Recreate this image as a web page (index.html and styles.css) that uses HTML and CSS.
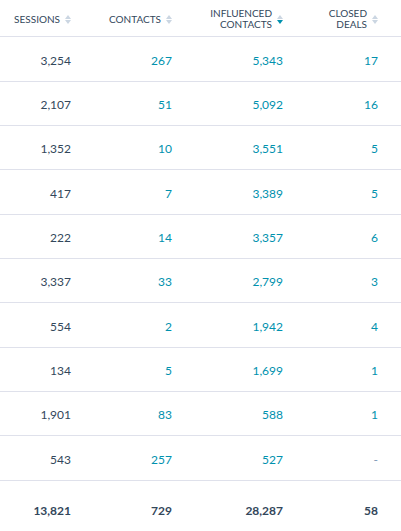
FILE: index.html
```html
<!DOCTYPE html>
<html>
<head>
<meta charset="utf-8">
<link rel="stylesheet" href="styles.css">
</head>
<body>
<table class="report">
  <colgroup>
    <col class="c1"><col class="c2"><col class="c3"><col class="c4">
  </colgroup>
  <thead>
    <tr>
      <th><span class="th-inner"><span class="label">Sessions</span><span class="sort"><i class="up"></i><i class="down"></i></span></span></th>
      <th><span class="th-inner"><span class="label">Contacts</span><span class="sort"><i class="up"></i><i class="down"></i></span></span></th>
      <th><span class="th-inner"><span class="label">Influenced<br>contacts</span><span class="sort"><i class="up"></i><i class="down active"></i></span></span></th>
      <th><span class="th-inner"><span class="label">Closed<br>deals</span><span class="sort"><i class="up"></i><i class="down"></i></span></span></th>
    </tr>
  </thead>
  <tbody>
    <tr><td>3,254</td><td class="link">267</td><td class="link">5,343</td><td class="link">17</td></tr>
    <tr><td>2,107</td><td class="link">51</td><td class="link">5,092</td><td class="link">16</td></tr>
    <tr><td>1,352</td><td class="link">10</td><td class="link">3,551</td><td class="link">5</td></tr>
    <tr><td>417</td><td class="link">7</td><td class="link">3,389</td><td class="link">5</td></tr>
    <tr><td>222</td><td class="link">14</td><td class="link">3,357</td><td class="link">6</td></tr>
    <tr><td>3,337</td><td class="link">33</td><td class="link">2,799</td><td class="link">3</td></tr>
    <tr><td>554</td><td class="link">2</td><td class="link">1,942</td><td class="link">4</td></tr>
    <tr><td>134</td><td class="link">5</td><td class="link">1,699</td><td class="link">1</td></tr>
    <tr><td>1,901</td><td class="link">83</td><td class="link">588</td><td class="link">1</td></tr>
    <tr><td>543</td><td class="link">257</td><td class="link">527</td><td class="empty">-</td></tr>
  </tbody>
  <tfoot>
    <tr><td>13,821</td><td>729</td><td>28,287</td><td>58</td></tr>
  </tfoot>
</table>
</body>
</html>
```
FILE: styles.css
```css
html, body {
  margin: 0;
  padding: 0;
  background: #ffffff;
}
body {
  font-family: Lato, "Noto Sans", sans-serif;
  color: #33475b;
  overflow: hidden;
}
.report {
  width: 401px;
  table-layout: fixed;
  border-collapse: separate;
  border-spacing: 0;
}
.c1 { width: 93px; }
.c2 { width: 101px; }
.c3 { width: 111px; }
.c4 { width: 96px; }

th, td {
  padding: 0 22px 0 0;
  text-align: right;
  vertical-align: middle;
  box-sizing: border-box;
}
th:last-child, td:last-child { padding-right: 23px; }

thead th {
  height: 37.4px;
  border-bottom: 1px solid #dfe1eb;
  font-size: 10px;
  font-weight: 400;
  text-transform: uppercase;
  line-height: 11px;
  color: #33475b;
  padding-top: 2px;
}
.th-inner {
  display: inline-flex;
  align-items: center;
  gap: 4px;
}
.label { text-align: right; letter-spacing: 0; }
.sort {
  display: inline-flex;
  flex-direction: column;
  gap: 1px;
  width: 7px;
  align-items: center;
}
.sort i {
  display: block;
  width: 0;
  height: 0;
  border-left: 3.5px solid transparent;
  border-right: 3.5px solid transparent;
}
.sort .up { border-bottom: 4px solid #cbd6e2; }
.sort .down { border-top: 4px solid #cbd6e2; }
.sort .down.active { border-top-color: #0091ae; }

tbody td {
  height: 44.33px;
  border-bottom: 1px solid #dfe1eb;
  font-size: 12px;
  color: #33475b;
  padding-top: 2px;
}
tbody td.link { color: #0091ae; }
tbody td.empty { color: #7c98b6; }

tfoot td {
  height: 60px;
  font-size: 12px;
  font-weight: 700;
  color: #33475b;
}
```
